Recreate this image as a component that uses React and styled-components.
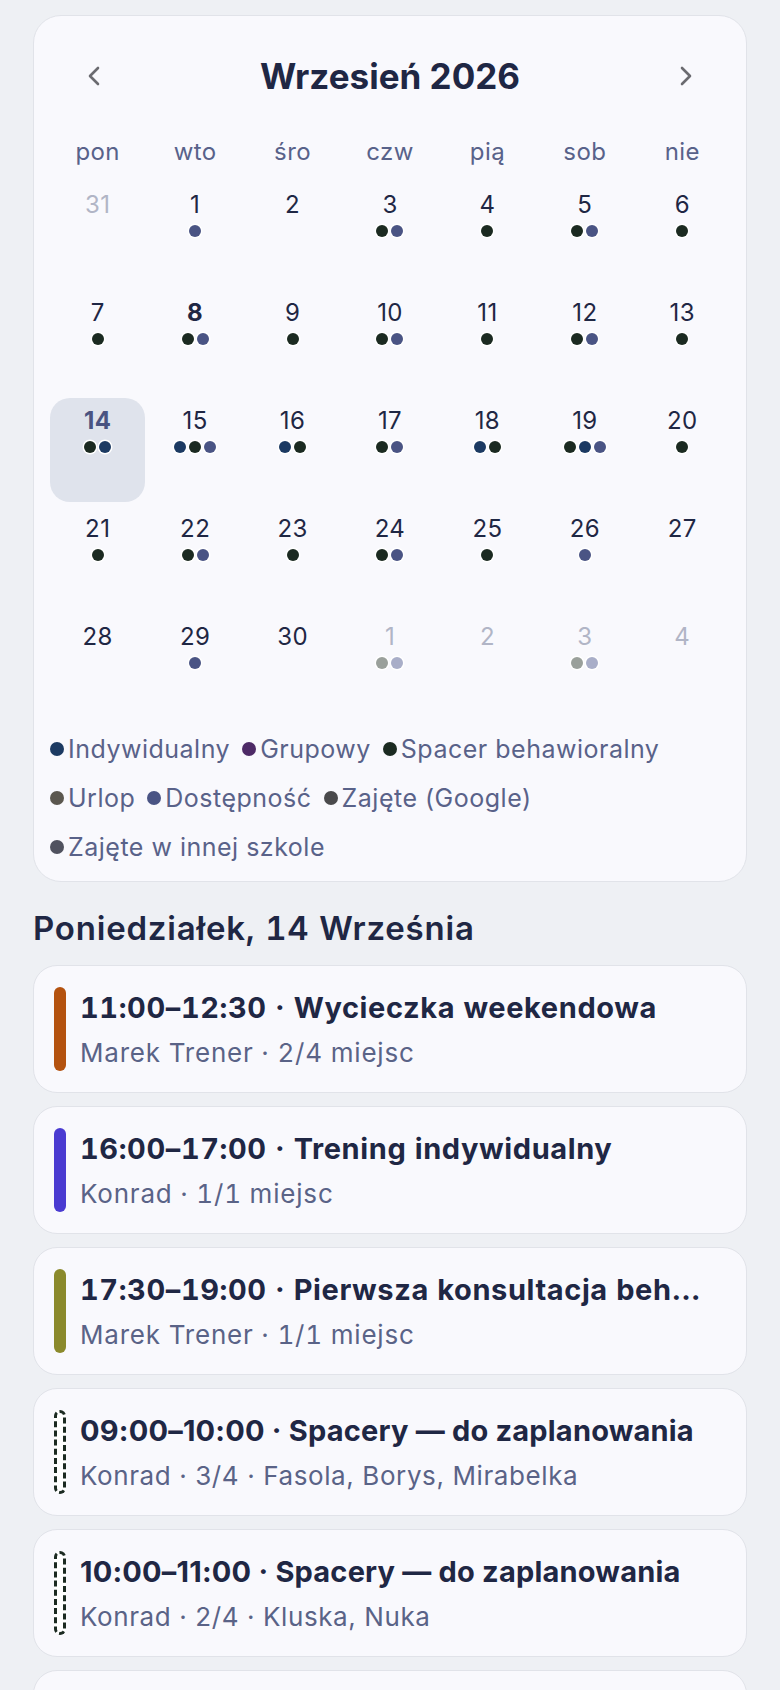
import React from "react";
import styled, { createGlobalStyle } from "styled-components";

const Global = createGlobalStyle`
  html, body { margin: 0; padding: 0; }
  body {
    background: #eef0f4;
    font-family: Inter, "Noto Sans", "Liberation Sans", sans-serif;
    color: #1f2744;
  }
  * { box-sizing: border-box; }
`;

const Page = styled.div`
  padding: 15px 33px 40px;
`;

const CalendarCard = styled.section`
  background: #f9f9fd;
  border: 1px solid #e1e3e9;
  border-radius: 28px;
  padding: 28px 16px 16px;
`;

const Header = styled.div`
  display: flex;
  align-items: center;
  justify-content: space-between;
  height: 64px;
  margin-bottom: 26px;
  padding: 0 32px;
`;

const NavButton = styled.button`
  width: 24px;
  height: 40px;
  border: none;
  background: transparent;
  display: flex;
  align-items: center;
  justify-content: center;
  padding: 0;
  cursor: pointer;
`;

const MonthTitle = styled.h2`
  margin: 0;
  font-size: 35px;
  font-weight: 700;
  color: #1f2744;
`;

const WeekRow = styled.div`
  display: grid;
  grid-template-columns: repeat(7, 1fr);
  column-gap: 2px;
  height: 36px;
  margin-bottom: 12px;
`;

const WeekDay = styled.div`
  text-align: center;
  font-size: 24px;
  letter-spacing: 0.4px;
  line-height: 36px;
  color: #58628a;
`;

const DaysGrid = styled.div`
  display: grid;
  grid-template-columns: repeat(7, 1fr);
  grid-auto-rows: 104px;
  column-gap: 2px;
  row-gap: 4px;
`;

const DayCell = styled.div`
  display: flex;
  flex-direction: column;
  align-items: center;
  padding-top: 8px;
  border-radius: 20px;
  background: ${(p) => (p.$selected ? "#dfe3ec" : "transparent")};
`;

const DayNum = styled.span`
  font-size: 24px;
  letter-spacing: 0.4px;
  line-height: 30px;
  font-weight: ${(p) => (p.$bold ? 700 : 400)};
  color: ${(p) => (p.$selected ? "#4a5381" : p.$muted ? "#b1b5c6" : "#1f2744")};
`;

const Dots = styled.div`
  display: flex;
  gap: 3px;
  margin-top: 5px;
  height: 12px;
`;

const Dot = styled.span`
  width: 12px;
  height: 12px;
  border-radius: 50%;
  background: ${(p) => p.$c};
  box-shadow: 0 0 0 1.5px #ffffff;
`;

const Legend = styled.div`
  display: flex;
  flex-wrap: wrap;
  column-gap: 12px;
  row-gap: 13px;
  margin-top: 13px;
`;

const LegendItem = styled.span`
  display: inline-flex;
  align-items: center;
  gap: 4px;
  font-size: 25px;
  letter-spacing: 0.5px;
  line-height: 36px;
  color: #596289;
`;

const LegendDot = styled.span`
  width: 14px;
  height: 14px;
  border-radius: 50%;
  background: ${(p) => p.$c};
`;

const DayHeading = styled.h3`
  margin: 26px 0 17px;
  font-size: 33px;
  letter-spacing: 0.8px;
  line-height: 40px;
  font-weight: 600;
  font-variant-numeric: tabular-nums;
  color: #1f2744;
`;

const EventList = styled.div`
  display: flex;
  flex-direction: column;
  gap: 13px;
`;

const EventCard = styled.div`
  display: flex;
  align-items: stretch;
  gap: 14px;
  background: #f9f9fd;
  border: 1px solid #e1e3e9;
  border-radius: 24px;
  padding: 21px 36px 21px 20px;
  min-height: 128px;
`;

const Bar = styled.span`
  flex: 0 0 12px;
  width: 12px;
  border-radius: 6px;
  background: ${(p) => (p.$dashed ? "#ffffff" : p.$c)};
  border: ${(p) => (p.$dashed ? `3px dashed ${p.$c}` : "none")};
`;

const EventBody = styled.div`
  flex: 1;
  min-width: 0;
  display: flex;
  flex-direction: column;
  gap: 6px;
`;

const EventTitle = styled.div`
  font-size: 29px;
  letter-spacing: ${(p) => (p.$tab ? "0.6px" : "0.2px")};
  line-height: 42px;
  font-weight: 700;
  color: #1f2744;
  white-space: nowrap;
  overflow: hidden;
  text-overflow: ellipsis;
  font-variant-numeric: ${(p) => (p.$tab ? "tabular-nums" : "normal")};
`;

const EventSub = styled.div`
  font-size: 26px;
  letter-spacing: ${(p) => (p.$tab ? "0.8px" : "0.6px")};
  line-height: 36px;
  color: #5a6387;
  white-space: nowrap;
  overflow: hidden;
  text-overflow: ellipsis;
  font-variant-numeric: ${(p) => (p.$tab ? "tabular-nums" : "normal")};
`;

const C = {
  green: "#1b2a21",
  indigo: "#4a5484",
  navy: "#1c3a62",
  fgrey: "#9aa09b",
  findigo: "#a9aec8",
};

const Chevron = ({ dir }) => (
  <svg width="14" height="20" viewBox="0 0 14 20" fill="none">
    <path
      d={dir === "left" ? "M11 2 L3 10 L11 18" : "M3 2 L11 10 L3 18"}
      stroke="#6b6b70"
      strokeWidth="2.6"
      strokeLinecap="round"
      strokeLinejoin="round"
    />
  </svg>
);

const weekDays = ["pon", "wto", "śro", "czw", "pią", "sob", "nie"];

const g = C.green, i = C.indigo, n = C.navy;
const days = [
  { d: 31, muted: true, dots: [] },
  { d: 1, dots: [i] },
  { d: 2, dots: [] },
  { d: 3, dots: [g, i] },
  { d: 4, dots: [g] },
  { d: 5, dots: [g, i] },
  { d: 6, dots: [g] },
  { d: 7, dots: [g] },
  { d: 8, bold: true, dots: [g, i] },
  { d: 9, dots: [g] },
  { d: 10, dots: [g, i] },
  { d: 11, dots: [g] },
  { d: 12, dots: [g, i] },
  { d: 13, dots: [g] },
  { d: 14, selected: true, bold: true, dots: [g, n] },
  { d: 15, dots: [n, g, i] },
  { d: 16, dots: [n, g] },
  { d: 17, dots: [g, i] },
  { d: 18, dots: [n, g] },
  { d: 19, dots: [g, n, i] },
  { d: 20, dots: [g] },
  { d: 21, dots: [g] },
  { d: 22, dots: [g, i] },
  { d: 23, dots: [g] },
  { d: 24, dots: [g, i] },
  { d: 25, dots: [g] },
  { d: 26, dots: [i] },
  { d: 27, dots: [] },
  { d: 28, dots: [] },
  { d: 29, dots: [i] },
  { d: 30, dots: [] },
  { d: 1, muted: true, dots: [C.fgrey, C.findigo] },
  { d: 2, muted: true, dots: [] },
  { d: 3, muted: true, dots: [C.fgrey, C.findigo] },
  { d: 4, muted: true, dots: [] },
];

const legend = [
  { c: "#1c3a62", t: "Indywidualny" },
  { c: "#4d2a66", t: "Grupowy" },
  { c: "#1b2a21", t: "Spacer behawioralny" },
  { c: "#5b574f", t: "Urlop" },
  { c: "#4a5484", t: "Dostępność" },
  { c: "#4a4a4c", t: "Zajęte (Google)" },
  { c: "#50525f", t: "Zajęte w innej szkole" },
];

const events = [
  { c: "#b4520f", tab: true, title: "11:00–12:30 · Wycieczka weekendowa", sub: "Marek Trener · 2/4 miejsc" },
  { c: "#4a3bd1", tab: true, title: "16:00–17:00 · Trening indywidualny", sub: "Konrad · 1/1 miejsc" },
  { c: "#8b8a2c", tab: true, title: "17:30–19:00 · Pierwsza konsultacja behawioralna", sub: "Marek Trener · 1/1 miejsc" },
  { c: "#1b2a21", dashed: true, title: "09:00–10:00 · Spacery — do zaplanowania", sub: "Konrad · 3/4 · Fasola, Borys, Mirabelka" },
  { c: "#1b2a21", dashed: true, title: "10:00–11:00 · Spacery — do zaplanowania", sub: "Konrad · 2/4 · Kluska, Nuka" },
  { c: "#1b2a21", dashed: true, title: "11:00–12:00 · Spacery — do zaplanowania", sub: "Konrad · 1/4 · Fasola" },
];

export default function App() {
  return (
    <>
      <Global />
      <Page>
        <CalendarCard>
          <Header>
            <NavButton aria-label="Poprzedni miesiąc"><Chevron dir="left" /></NavButton>
            <MonthTitle>Wrzesień 2026</MonthTitle>
            <NavButton aria-label="Następny miesiąc"><Chevron dir="right" /></NavButton>
          </Header>
          <WeekRow>
            {weekDays.map((w) => (
              <WeekDay key={w}>{w}</WeekDay>
            ))}
          </WeekRow>
          <DaysGrid>
            {days.map((day, idx) => (
              <DayCell key={idx} $selected={day.selected}>
                <DayNum $muted={day.muted} $bold={day.bold} $selected={day.selected}>
                  {day.d}
                </DayNum>
                <Dots>
                  {day.dots.map((c, k) => (
                    <Dot key={k} $c={c} />
                  ))}
                </Dots>
              </DayCell>
            ))}
          </DaysGrid>
          <Legend>
            {legend.map((l) => (
              <LegendItem key={l.t}>
                <LegendDot $c={l.c} />
                {l.t}
              </LegendItem>
            ))}
          </Legend>
        </CalendarCard>

        <DayHeading>Poniedziałek, 14 Września</DayHeading>

        <EventList>
          {events.map((e, k) => (
            <EventCard key={k}>
              <Bar $c={e.c} $dashed={e.dashed} />
              <EventBody>
                <EventTitle $tab={e.tab}>{e.title}</EventTitle>
                <EventSub $tab={e.tab}>{e.sub}</EventSub>
              </EventBody>
            </EventCard>
          ))}
        </EventList>
      </Page>
    </>
  );
}
